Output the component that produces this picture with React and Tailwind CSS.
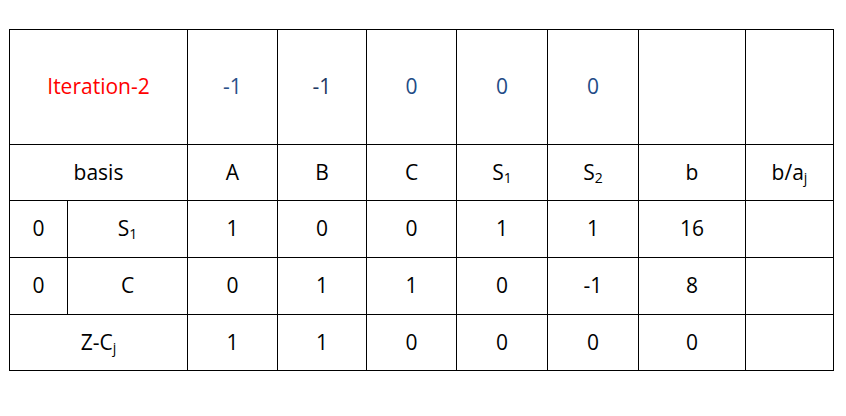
import React from "react";

const cols = [58, 120, 90, 89, 90, 91, 91, 107, 88];

const Sub = ({ children }) => (
  <sub className="text-[14px] relative bottom-[-0.2em]">{children}</sub>
);

const rows = [
  { left: ["0", <>S<Sub>1</Sub></>], vals: ["1", "0", "0", "1", "1", "16", ""] },
  { left: ["0", "C"], vals: ["0", "1", "1", "0", "-1", "8", ""] },
];

export default function App() {
  const cell = "border border-black text-center align-middle p-0";
  return (
    <div className="w-[846px] h-[416px] bg-white pl-[9px] pt-[29px] font-['Open_Sans',sans-serif] text-[21px] text-black">
      <table className="table-fixed border-collapse w-[825px]">
        <colgroup>
          {cols.map((w, i) => (
            <col key={i} style={{ width: w }} />
          ))}
        </colgroup>
        <tbody>
          <tr className="h-[115px]">
            <td colSpan={2} className={`${cell} text-[#ff0000]`}>Iteration-2</td>
            <td className={`${cell} text-[#2a5189]`}>-1</td>
            <td className={`${cell} text-[#1f3864]`}>-1</td>
            <td className={`${cell} text-[#224b86]`}>0</td>
            <td className={`${cell} text-[#224b86]`}>0</td>
            <td className={`${cell} text-[#224b86]`}>0</td>
            <td className={cell}></td>
            <td className={cell}></td>
          </tr>
          <tr className="h-[56px]">
            <td colSpan={2} className={cell}>basis</td>
            <td className={cell}>A</td>
            <td className={cell}>B</td>
            <td className={cell}>C</td>
            <td className={cell}>S<Sub>1</Sub></td>
            <td className={cell}>S<Sub>2</Sub></td>
            <td className={cell}>b</td>
            <td className={cell}>b/a<Sub>j</Sub></td>
          </tr>
          {rows.map((r, i) => (
            <tr key={i} className="h-[57px]">
              <td className={cell}>{r.left[0]}</td>
              <td className={cell}>{r.left[1]}</td>
              {r.vals.map((v, j) => (
                <td key={j} className={cell}>{v}</td>
              ))}
            </tr>
          ))}
          <tr className="h-[56px]">
            <td colSpan={2} className={cell}>Z-C<Sub>j</Sub></td>
            {["1", "1", "0", "0", "0", "0", ""].map((v, j) => (
              <td key={j} className={cell}>{v}</td>
            ))}
          </tr>
        </tbody>
      </table>
    </div>
  );
}
